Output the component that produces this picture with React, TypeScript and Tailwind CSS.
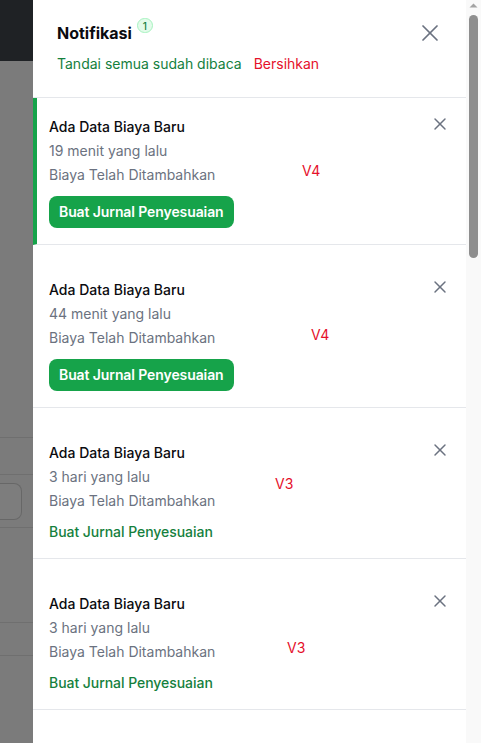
import React from 'react';
import { X } from 'lucide-react';
import { clsx } from 'clsx';

type Notif = {
  time: string;
  unread?: boolean;
  primary?: boolean;
  tag?: string;
  tagPos?: string;
};

const notifs: Notif[] = [
  { time: '19 menit yang lalu', unread: true, primary: true, tag: 'V4', tagPos: 'left-[265px] top-[63px]' },
  { time: '44 menit yang lalu', primary: true, tag: 'V4', tagPos: 'left-[278px] top-[80px]' },
  { time: '3 hari yang lalu', tag: 'V3', tagPos: 'left-[242px] top-[66px]' },
  { time: '3 hari yang lalu', tag: 'V3', tagPos: 'left-[254px] top-[79px]' },
];

const NotifItem = ({ n }: { n: Notif }) => (
  <div
    className={clsx(
      'relative border-b border-[#e5e7eb] pr-4',
      n.unread ? 'border-l-4 border-l-[#16a34a] pl-3 pt-[17px]' : 'pl-4 pt-[33px]',
      n.primary ? 'pb-4' : 'pb-[14px]'
    )}
  >
    <div className="flex items-start justify-between">
      <div className="text-sm leading-6">
        <p className="font-medium text-[#0b0b0f]">Ada Data Biaya Baru</p>
        <p className="text-[#6b7280]">{n.time}</p>
        <p className="text-[#6b7280]">Biaya Telah Ditambahkan</p>
      </div>
      <button className="-mt-px text-[#6b7280]">
        <X size={20} strokeWidth={1.75} />
      </button>
    </div>
    {n.primary ? (
      <button className="mt-[9px] h-8 rounded-lg bg-[#16a34a] px-[10px] text-sm font-semibold tracking-[-0.1px] text-white">
        Buat Jurnal Penyesuaian
      </button>
    ) : (
      <button className="mt-[7px] block text-sm font-medium leading-6 tracking-[-0.05px] text-[#15803d]">
        Buat Jurnal Penyesuaian
      </button>
    )}
    {n.tag && (
      <span className={clsx('absolute text-sm leading-5 text-[#e5112b]', n.tagPos)}>{n.tag}</span>
    )}
  </div>
);

const App = () => {
  return (
    <div className="relative h-screen w-full overflow-hidden font-['Inter',sans-serif]">
      {/* page behind the drawer */}
      <div className="flex h-full flex-col bg-[#f7f7f7]">
        <div className="h-[61px] shrink-0 bg-[#3f444b]" />
        <div className="h-[376px] shrink-0" />
        <div className="h-[37px] shrink-0 border-t border-[#dedede]" />
        <div className="h-[53px] shrink-0 border-t border-[#dedede] pt-2">
          <div className="h-[37px] w-[22px] rounded-r-lg border border-l-0 border-[#cfcfcf] bg-[#fafafa]" />
        </div>
        <div className="h-[95px] shrink-0 border-t border-[#dedede]" />
        <div className="h-[33px] shrink-0 border-t border-[#dedede]" />
        <div className="flex-1 border-t border-[#dedede]" />
      </div>

      {/* overlay */}
      <div className="fixed inset-0 bg-black/50" />

      {/* drawer */}
      <div className="fixed inset-y-0 right-0 flex w-[448px] bg-white">
        <div className="min-w-0 flex-1 overflow-hidden">
          <div className="border-b border-[#e5e7eb] pb-[23px] pl-6 pr-[22px] pt-[19px]">
            <div className="flex h-7 items-center justify-between">
              <div className="flex items-start">
                <h2 className="text-base font-bold leading-7 text-[#0b0b0f]">Notifikasi</h2>
                <span className="ml-[5px] -mt-px flex h-[15px] min-w-[16px] items-center justify-center rounded-full border border-[#a7f3c0] bg-[#e3fbea] px-1 text-[10px] font-medium leading-none text-[#15803d]">
                  1
                </span>
              </div>
              <button className="text-[#6b7280]">
                <X size={28} strokeWidth={1.5} />
              </button>
            </div>
            <div className="mt-[7px] flex gap-3 text-sm leading-5">
              <button className="text-[#15803d]">Tandai semua sudah dibaca</button>
              <button className="text-[#e5112b]">Bersihkan</button>
            </div>
          </div>
          {notifs.map((n, i) => (
            <NotifItem key={i} n={n} />
          ))}
        </div>

        {/* scrollbar */}
        <div className="flex w-[15px] shrink-0 flex-col items-center bg-[#f9f9f9]">
          <svg width="15" height="15" viewBox="0 0 15 15">
            <path d="M3.5 7.5 L7.5 3.5 L11.5 7.5 Z" fill="#a3a3a3" />
          </svg>
          <div className="h-[243px] w-[9px] rounded-full bg-[#8e8e8e]" />
        </div>
      </div>
    </div>
  );
};

export default App;
